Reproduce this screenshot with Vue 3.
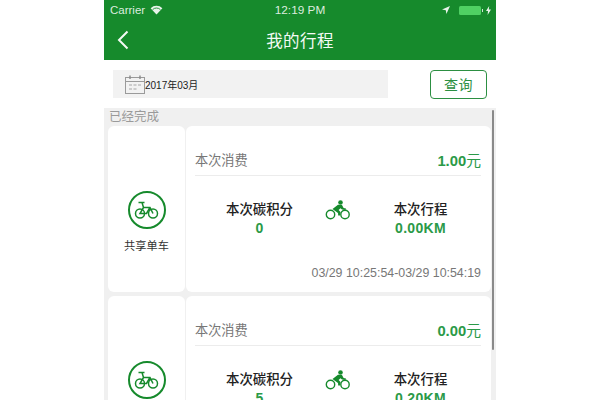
<template>
  <div class="page">
    <div class="phone">
      <div class="top">
        <div class="status">
          <div class="status-left">
            <span>Carrier</span>
            <svg width="13" height="10" viewBox="0 0 13 10"><path d="M6.5 9.5 L0.6 3.2 A8.4 8.4 0 0 1 12.4 3.2 Z" fill="#e8f3ea" /><path d="M2.6 4.6 A5.6 5.6 0 0 1 10.4 4.6" fill="none" stroke="#168a2c" stroke-width="0.9" /></svg>
          </div>
          <div class="status-time">12:19 PM</div>
          <div class="status-right">
            <svg width="8" height="8" viewBox="0 0 8 8"><path d="M8 0 L0 3.6 L3.8 4.2 L4.4 8 Z" fill="#e8f3ea" /></svg>
            <span class="battery"></span>
            <span class="battery-tip"></span>
            <svg width="5" height="9" viewBox="0 0 5 9"><path d="M3.2 0 L0 5 L2 5 L1.6 9 L5 3.6 L2.8 3.6 Z" fill="#e8f3ea" /></svg>
          </div>
        </div>
        <div class="nav">
          <svg class="back" width="12" height="20" viewBox="0 0 12 20"><path d="M10.5 1.5 L2 10 L10.5 18.5" fill="none" stroke="#f4faf5" stroke-width="2" /></svg>
          <span class="title">我的行程</span>
        </div>
      </div>

      <div class="search">
        <div class="date-box">
          <svg width="20" height="19" viewBox="0 0 20 19">
            <rect x="0.5" y="2.5" width="19" height="16" fill="none" stroke="#9a9a9a" />
            <path d="M0.5 6.5 H19.5" stroke="#9a9a9a" />
            <path d="M5 0.5 V4 M15 0.5 V4" stroke="#8a8a8a" stroke-width="1.4" />
            <path d="M4 10 H7 M8.5 10 H11.5 M13 10 H16 M4 14 H7 M8.5 14 H11.5" stroke="#a5a5a5" stroke-width="1.2" />
          </svg>
          <span>2017年03月</span>
        </div>
        <button class="btn-query">查询</button>
      </div>

      <div class="list">
        <div class="section-label">已经完成</div>
        <div v-for="(trip, idx) in trips" :key="idx" class="trip">
          <div class="side-card">
            <div class="side-icon">
              <svg width="25" height="18" viewBox="0 0 25 18" fill="none" stroke="#168a2c" stroke-width="1.5">
                <circle cx="6" cy="12.5" r="4.5" />
                <circle cx="19" cy="12.5" r="4.5" />
                <path d="M4.5 1.5 H10.5 M8 1.5 L9.5 6.5 H16 L19 12.5 M9.5 6.5 L6 12.5 H12.5 L16 6.5" />
              </svg>
            </div>
            <div class="side-label">共享单车</div>
          </div>
          <div class="main-card">
            <div class="cost-row">
              <span class="cost-label">本次消费</span>
              <span class="cost-value">{{ trip.cost }}<em>元</em></span>
            </div>
            <div class="stats">
              <div class="stat">
                <div class="stat-label">本次碳积分</div>
                <div class="stat-value">{{ trip.carbon }}</div>
              </div>
              <svg class="rider" width="26" height="20" viewBox="0 0 26 20" fill="none">
                <circle cx="5.5" cy="14.5" r="4.2" stroke="#168a2c" stroke-width="1.4" />
                <circle cx="20" cy="14.5" r="4.2" stroke="#168a2c" stroke-width="1.4" />
                <circle cx="15.5" cy="2.5" r="2.3" fill="#168a2c" />
                <path d="M7.5 9 L13 4.8 L17 5 L18.6 8 L21 8.6 L20.6 10 L17 9.4 L15.5 8.2 L13.6 10 L15.5 12 L15 15.5 L13.2 15.5 L13 13 L9.5 10.5 Z" fill="#168a2c" />
              </svg>
              <div class="stat">
                <div class="stat-label">本次行程</div>
                <div class="stat-value">{{ trip.distance }}</div>
              </div>
            </div>
            <div class="trip-time">{{ trip.time }}</div>
          </div>
        </div>
        <div class="scrollbar"></div>
      </div>
    </div>
  </div>
</template>

<script setup>
const trips = [
  { cost: '1.00', carbon: '0', distance: '0.00KM', time: '03/29 10:25:54-03/29 10:54:19' },
  { cost: '0.00', carbon: '5', distance: '0.20KM', time: '03/29 11:02:10-03/29 11:20:33' }
];
</script>

<style>
html, body { margin: 0; background: #fff; overflow: hidden; }
</style>

<style scoped>
.page { width: 600px; height: 400px; overflow: hidden; display: flex; justify-content: center; background: #fff; font-family: "Liberation Sans", "Noto Sans CJK SC", sans-serif; }
.phone { width: 392px; display: flex; flex-direction: column; }
.top { height: 60px; background: #168a2c; color: #f4faf5; flex-shrink: 0; }
.status { height: 20px; display: flex; align-items: center; justify-content: space-between; padding: 0 5px 0 6px; font-size: 11.5px; position: relative; color: #dcecdf; }
.status-left { display: flex; align-items: center; gap: 5px; }
.status-time { position: absolute; left: 0; right: 0; text-align: center; font-size: 11.8px; }
.status-right { display: flex; align-items: center; }
.status-right svg:first-child { margin-right: 9px; }
.battery { width: 22px; height: 9px; background: #4fd063; border-radius: 1.5px; }
.battery-tip { width: 1.5px; height: 3px; background: #cfe6d3; margin: 0 3px 0 1px; }
.nav { height: 40px; display: flex; align-items: center; justify-content: center; position: relative; }
.back { position: absolute; left: 13px; top: 10px; }
.title { font-size: 16.5px; letter-spacing: 0.4px; }
.search { height: 48px; flex-shrink: 0; display: flex; align-items: center; justify-content: space-between; padding: 0 9px; box-sizing: border-box; background: #fff; }
.date-box { width: 275px; height: 28px; background: #f2f2f2; display: flex; align-items: center; padding-left: 12px; box-sizing: border-box; font-size: 10px; color: #222; }
.btn-query { width: 57px; height: 29px; background: #fff; border: 1px solid #2c8f42; border-radius: 4px; color: #2c8f42; font-size: 14px; font-family: inherit; padding: 0; letter-spacing: 0.5px; }
.list { flex: 1; background: #f0f0f0; position: relative; padding: 0 5px 0 4px; min-height: 0; }
.section-label { height: 18px; line-height: 19px; font-size: 12.5px; color: #9a9a9a; padding-left: 1px; }
.trip { display: flex; gap: 1px; height: 166px; margin-bottom: 4px; }
.side-card { width: 77px; flex-shrink: 0; background: #fff; border-radius: 6px; display: flex; flex-direction: column; align-items: center; gap: 10px; padding-top: 65px; box-sizing: border-box; }
.side-icon { width: 38px; height: 38px; border: 2px solid #168a2c; border-radius: 50%; box-sizing: border-box; display: flex; align-items: center; justify-content: center; }
.side-label { font-size: 11.2px; line-height: 15px; color: #333; }
.main-card { flex: 1; min-width: 0; background: #fff; border-radius: 6px; padding: 0 10px 0 9px; display: flex; flex-direction: column; }
.cost-row { height: 50px; flex-shrink: 0; display: flex; justify-content: space-between; align-items: center; border-bottom: 1px solid #ececec; box-sizing: border-box; padding-top: 26px; padding-bottom: 9px; }
.cost-label { font-size: 13.2px; color: #777; }
.cost-value { font-size: 14.8px; font-weight: 700; color: #2b9a48; }
.cost-value em { font-style: normal; font-weight: 400; }
.stats { height: 62px; flex-shrink: 0; display: flex; align-items: flex-start; padding: 25px 0 0 4px; justify-content: center; }
.stat { width: 135px; flex-shrink: 0; text-align: center; }
.stat-label { font-size: 13.4px; font-weight: 500; color: #222; line-height: 17px; }
.stat-value { font-size: 14px; font-weight: 700; color: #2b9a48; line-height: 19px; letter-spacing: 0.3px; margin-top: 1px; }
.rider { flex-shrink: 0; margin: -1px 2px 0 -2px; }
.trip-time { font-size: 12.4px; color: #777; text-align: right; margin-top: 3px; }
.scrollbar { position: absolute; right: 2px; top: 2px; width: 2.5px; height: 240px; background: #8a8a8a; border-radius: 2px; }
</style>
